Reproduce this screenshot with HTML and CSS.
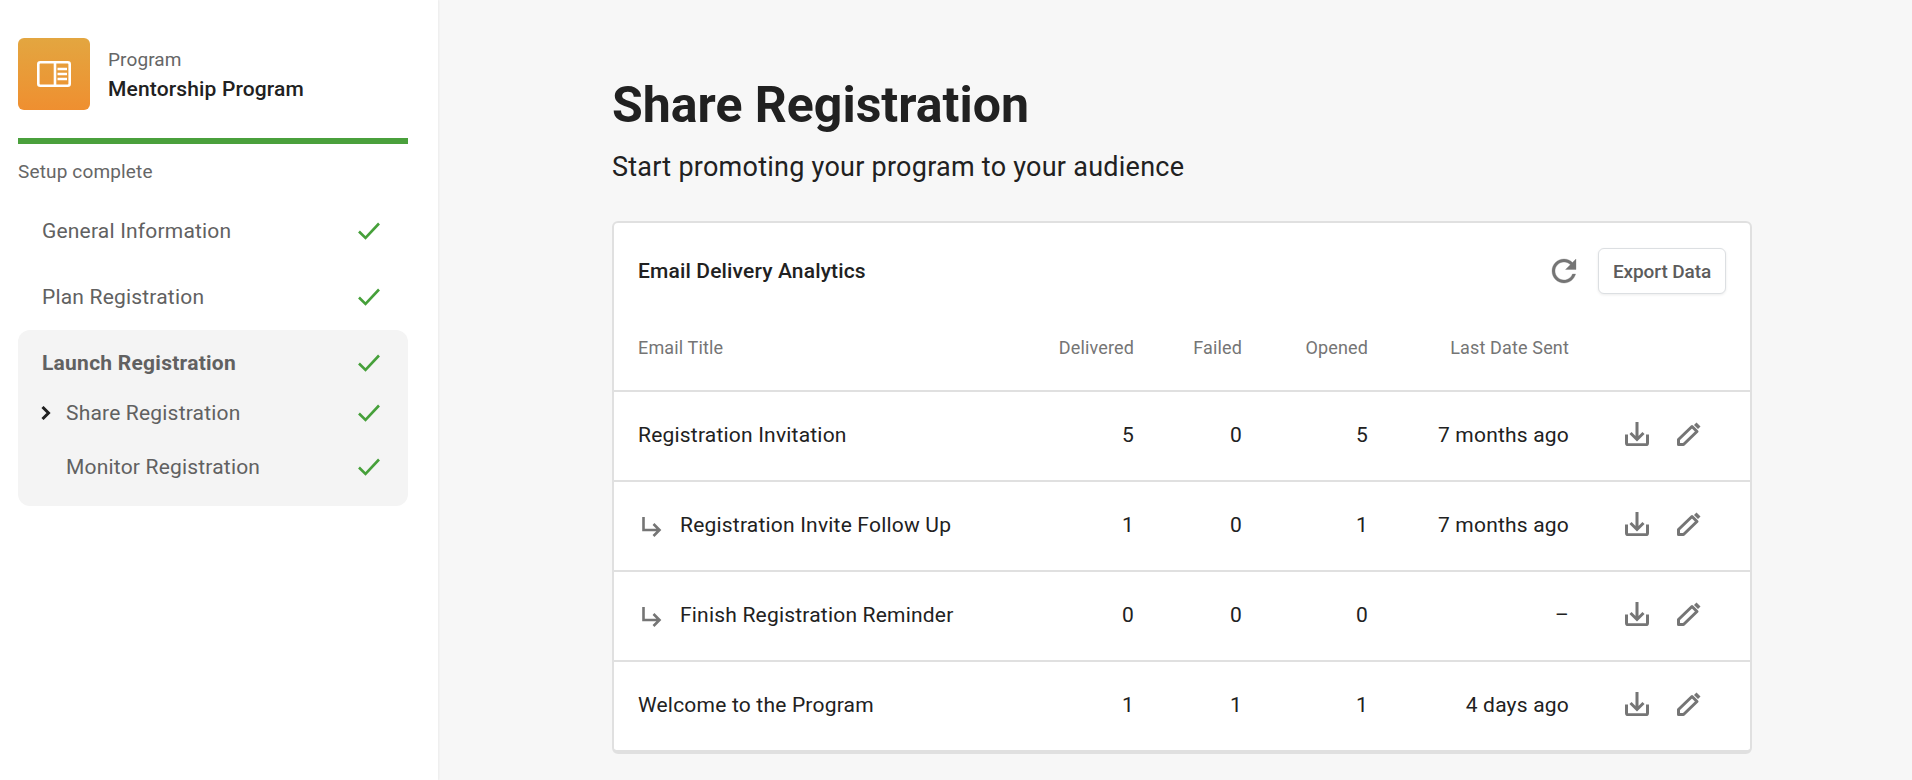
FILE: index.html
```html
<!DOCTYPE html>
<html lang="en">
<head>
<meta charset="utf-8">
<title>Share Registration</title>
<link rel="stylesheet" href="styles.css">
</head>
<body>
<svg class="defs" width="0" height="0" aria-hidden="true">
  <symbol id="check" viewBox="0 0 22 18"><path d="M1 9.5 7.5 16 21 1.5" fill="none" stroke="currentColor" stroke-width="2.6"/></symbol>
  <symbol id="download" viewBox="0 0 24 24"><path d="M1.5 12.5v8.7a1.5 1.5 0 0 0 1.5 1.5h18a1.5 1.5 0 0 0 1.5-1.5v-8.7M12 0v17M5.5 11l6.5 6.5 6.5-6.5" fill="none" stroke="currentColor" stroke-width="3"/></symbol>
  <symbol id="edit" viewBox="0 0 24 24"><path d="M1.5 22.5v-5L15 4.5l5 5L6.5 22.5z" fill="none" stroke="currentColor" stroke-width="3" stroke-linejoin="round"/><path d="M17 3 19.5.5l4 4L21 7z" fill="currentColor"/></symbol>
  <symbol id="sub" viewBox="0 0 20 20"><path d="M1.5 0v13h16M11.5 7l6 6-6 6" fill="none" stroke="currentColor" stroke-width="2.6"/></symbol>
</svg>
<div class="app">
  <aside class="sidebar">
    <div class="program">
      <div class="logo">
        <svg width="34" height="26" viewBox="0 0 34 26" fill="none" stroke="#fff" stroke-width="2.6">
          <rect x="1.3" y="1.3" width="31.4" height="23.4" rx="2"/>
          <path d="M18 1.3v23.4M20.5 8h9.5M20.5 13h9.5M20.5 18h9.5"/>
        </svg>
      </div>
      <div class="program-text">
        <div class="program-label">Program</div>
        <div class="program-name">Mentorship Program</div>
      </div>
    </div>
    <div class="progress"></div>
    <div class="setup">Setup complete</div>
    <div class="step"><span>General Information</span><svg class="check"><use href="#check"/></svg></div>
    <div class="step"><span>Plan Registration</span><svg class="check"><use href="#check"/></svg></div>
    <div class="group">
      <div class="step step-head"><span>Launch Registration</span><svg class="check"><use href="#check"/></svg></div>
      <div class="step sub-first">
        <svg class="chevron" viewBox="0 0 10 14" width="10" height="14"><path d="M1.5 1 7.5 7l-6 6" fill="none" stroke="#212121" stroke-width="3"/></svg>
        <span class="sub-label">Share Registration</span><svg class="check"><use href="#check"/></svg>
      </div>
      <div class="step sub-second"><span class="sub-label indent">Monitor Registration</span><svg class="check"><use href="#check"/></svg></div>
    </div>
  </aside>
  <main class="main">
    <h1 class="title">Share Registration</h1>
    <p class="subtitle">Start promoting your program to your audience</p>
    <section class="card">
      <header class="card-head">
        <h2 class="card-title">Email Delivery Analytics</h2>
        <svg class="refresh" viewBox="0 0 24 24" width="36" height="36"><path d="M17.65 6.35C16.2 4.9 14.21 4 12 4c-4.42 0-7.99 3.58-7.99 8s3.57 8 7.99 8c3.73 0 6.84-2.55 7.73-6h-2.08c-.82 2.33-3.04 4-5.65 4-3.31 0-6-2.69-6-6s2.69-6 6-6c1.66 0 3.14.69 4.22 1.78L13 11h7V4l-2.35 2.35z"/></svg>
        <button class="export">Export Data</button>
      </header>
      <div class="row row-head">
        <div>Email Title</div><div class="num">Delivered</div><div class="num">Failed</div><div class="num">Opened</div><div class="num">Last Date Sent</div><div></div>
      </div>
      <div class="row">
        <div class="name">Registration Invitation</div><div class="num">5</div><div class="num">0</div><div class="num">5</div><div class="num">7 months ago</div>
        <div class="actions"><svg class="dl"><use href="#download"/></svg><svg class="ed"><use href="#edit"/></svg></div>
      </div>
      <div class="row">
        <div class="name"><svg class="sub-icon"><use href="#sub"/></svg>Registration Invite Follow Up</div><div class="num">1</div><div class="num">0</div><div class="num">1</div><div class="num">7 months ago</div>
        <div class="actions"><svg class="dl"><use href="#download"/></svg><svg class="ed"><use href="#edit"/></svg></div>
      </div>
      <div class="row">
        <div class="name"><svg class="sub-icon"><use href="#sub"/></svg>Finish Registration Reminder</div><div class="num">0</div><div class="num">0</div><div class="num">0</div><div class="num">–</div>
        <div class="actions"><svg class="dl"><use href="#download"/></svg><svg class="ed"><use href="#edit"/></svg></div>
      </div>
      <div class="row">
        <div class="name">Welcome to the Program</div><div class="num">1</div><div class="num">1</div><div class="num">1</div><div class="num">4 days ago</div>
        <div class="actions"><svg class="dl"><use href="#download"/></svg><svg class="ed"><use href="#edit"/></svg></div>
      </div>
    </section>
  </main>
</div>
</body>
</html>
```

FILE: styles.css
```css
* { box-sizing: border-box; }
html, body { margin: 0; height: 100%; overflow: hidden; }
body { font-family: Roboto, "Liberation Sans", sans-serif; color: #212121; background: #f7f7f7; }
.defs { position: absolute; }
.app { display: flex; height: 780px; }

.sidebar { width: 438px; flex: none; background: #fff; padding: 38px 30px 0 18px; box-shadow: 1px 0 2px rgba(0,0,0,.05); }
.program { display: flex; align-items: center; gap: 18px; }
.logo { width: 72px; height: 72px; border-radius: 6px; background: linear-gradient(#e3a640, #ef8f30); display: flex; align-items: center; justify-content: center; }
.program-text { padding-top: 4px; }
.program-label { font-size: 19px; line-height: 24px; color: #666; letter-spacing: .1px; }
.program-name { font-size: 21px; line-height: 30px; font-weight: 500; margin-top: 2px; letter-spacing: .15px; }
.progress { height: 6px; background: #4aa03c; margin-top: 28px; }
.setup { font-size: 19px; line-height: 24px; color: #666; letter-spacing: .15px; margin: 16px 0 14px; }

.step { display: flex; align-items: center; justify-content: space-between; height: 66px; padding: 0 28px 0 24px; font-size: 21px; color: #616161; letter-spacing: .19px; }
.check { width: 22px; height: 18px; color: #46a03a; flex: none; }
.group { background: #f4f4f4; border-radius: 12px; height: 176px; }
.step-head { font-weight: 700; letter-spacing: .25px; }
.sub-first { height: 34px; padding-left: 23px; }
.sub-second { height: 74px; }
.chevron { flex: none; margin-right: 15px; }
.sub-label { flex: 1; }
.indent { padding-left: 24px; }

.main { flex: 1; padding: 0 160px 0 174px; min-width: 0; }
.title { font-size: 50px; line-height: 60px; font-weight: 700; margin: 75px 0 0; }
.subtitle { font-size: 27px; line-height: 34px; margin: 15px 0 0; color: #212121; letter-spacing: .25px; }
.card { background: #fff; border: 2px solid #e0e0e0; border-bottom-width: 4px; border-radius: 6px; margin-top: 37px; }
.card-head { display: flex; align-items: center; height: 96px; padding: 0 24px; }
.card-title { flex: 1; font-size: 21px; font-weight: 500; margin: 0; letter-spacing: .15px; }
.refresh { fill: #757575; stroke: #757575; stroke-width: .2; margin-right: 16px; }
.export { height: 46px; width: 128px; padding: 0; background: #fff; border: 1px solid #dcdfe2; border-radius: 6px; box-shadow: 0 1px 3px rgba(0,0,0,.08); font: 500 19px Roboto, sans-serif; letter-spacing: -.1px; color: #5c5c5c; }

.row { display: grid; grid-template-columns: 1fr 135px 108px 126px 201px 181px; align-items: center; height: 90px; padding: 0 0 2px 24px; border-top: 2px solid #e0e0e0; font-size: 21px; letter-spacing: .2px; }
.row-head { height: 71px; border-top: 0; font-size: 18px; color: #757575; letter-spacing: .15px; padding-bottom: 14px; }
.num { text-align: right; }
.name { display: flex; align-items: center; }
.sub-icon { width: 20px; height: 20px; color: #757575; margin: 3px 18px 0 4px; }
.actions { display: flex; align-items: center; padding: 0 0 2px 56px; color: #757575; }
.dl { width: 24px; height: 24px; }
.ed { width: 24px; height: 24px; margin-left: 28px; }
```
